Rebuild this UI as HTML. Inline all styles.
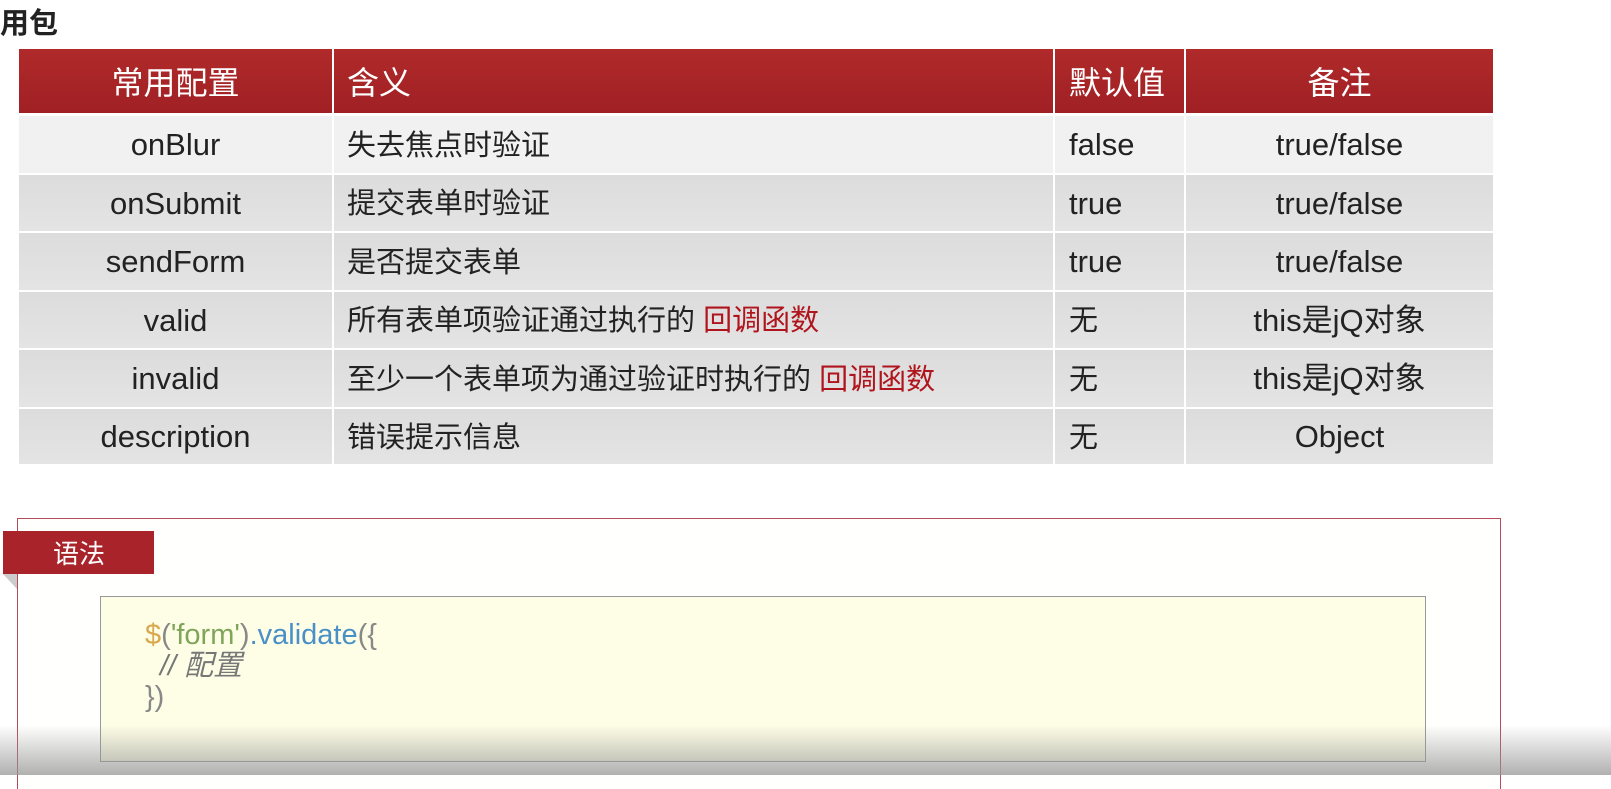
<!DOCTYPE html>
<html><head><meta charset="utf-8"><style>
body{margin:0;width:1611px;height:775px;overflow:hidden;background:#fff;position:relative;font-family:"Liberation Sans","Noto Sans CJK SC",sans-serif;}
.t{position:absolute;left:0;top:4px;font-size:29px;font-weight:bold;color:#222;line-height:40px}
.row{position:absolute;left:19px;width:1476px;display:flex;}
.c{height:100%;display:flex;align-items:center;box-sizing:border-box;font-size:29px;color:#222;margin-right:2px;line-height:1;white-space:nowrap;padding-top:3px}
.c span{line-height:1}
.e{font-size:31px;padding-top:0}
.c1{width:313px;justify-content:center}.c2{width:719px;padding-left:13px}.c3{width:129px;padding-left:14px}.c4{width:307px;justify-content:center;margin-right:0}
.h .c{background:linear-gradient(#b02a2a,#a02024);color:#fff;font-size:32px;padding-top:3px}
.l .c{background:#f1f1f1}.d .c{background:linear-gradient(#dcdcdc,#e4e4e4)}
.r{color:#b0141c}
</style></head><body>
<div class="t">用包</div>
<div class="row h" style="top:49px;height:64px"><div class="c c1">常用配置</div><div class="c c2">含义</div><div class="c c3">默认值</div><div class="c c4">备注</div></div>
<div class="row l" style="top:116px;height:57px"><div class="c c1 e">onBlur</div><div class="c c2">失去焦点时验证</div><div class="c c3 e">false</div><div class="c c4 e">true/false</div></div>
<div class="row d" style="top:175px;height:56px"><div class="c c1 e">onSubmit</div><div class="c c2">提交表单时验证</div><div class="c c3 e">true</div><div class="c c4 e">true/false</div></div>
<div class="row d" style="top:233px;height:57px"><div class="c c1 e">sendForm</div><div class="c c2">是否提交表单</div><div class="c c3 e">true</div><div class="c c4 e">true/false</div></div>
<div class="row d" style="top:292px;height:56px"><div class="c c1 e">valid</div><div class="c c2">所有表单项验证通过执行的&nbsp;<span class="r">回调函数</span></div><div class="c c3">无</div><div class="c c4 e">this是jQ对象</div></div>
<div class="row d" style="top:350px;height:57px"><div class="c c1 e">invalid</div><div class="c c2">至少一个表单项为通过验证时执行的&nbsp;<span class="r">回调函数</span></div><div class="c c3">无</div><div class="c c4 e">this是jQ对象</div></div>
<div class="row d" style="top:409px;height:55px"><div class="c c1 e">description</div><div class="c c2">错误提示信息</div><div class="c c3">无</div><div class="c c4 e">Object</div></div>

<div style="position:absolute;left:17px;top:518px;width:1482px;height:270px;border:1px solid #b54a5e;border-bottom:none;background:#fffffd"></div>
<div style="position:absolute;left:3px;top:531px;width:151px;height:43px;background:#a8232a;color:#fff;font-size:26px;display:flex;align-items:center;padding-left:50px;box-sizing:border-box">语法</div>
<div style="position:absolute;left:3px;top:574px;width:0;height:0;border-top:15px solid #ccc;border-left:14px solid transparent"></div>
<div style="position:absolute;left:100px;top:596px;width:1326px;height:166px;border:1px solid #999;box-sizing:border-box;background:#fefee6"></div>
<div style="position:absolute;left:145px;top:620px;font-size:29px;line-height:31px;color:#888">
<div><span style="color:#d9a84e">$</span>(<span style="color:#7ea55a">'form'</span>)<span style="color:#4a90c8">.validate</span>({</div>
<div style="font-style:italic;padding-left:15px;color:#777">// 配置</div>
<div>})</div></div>
<div style="position:absolute;left:0;top:725px;width:1611px;height:50px;background:linear-gradient(rgba(160,160,160,0),rgba(150,150,150,.75))"></div>
</body></html>
